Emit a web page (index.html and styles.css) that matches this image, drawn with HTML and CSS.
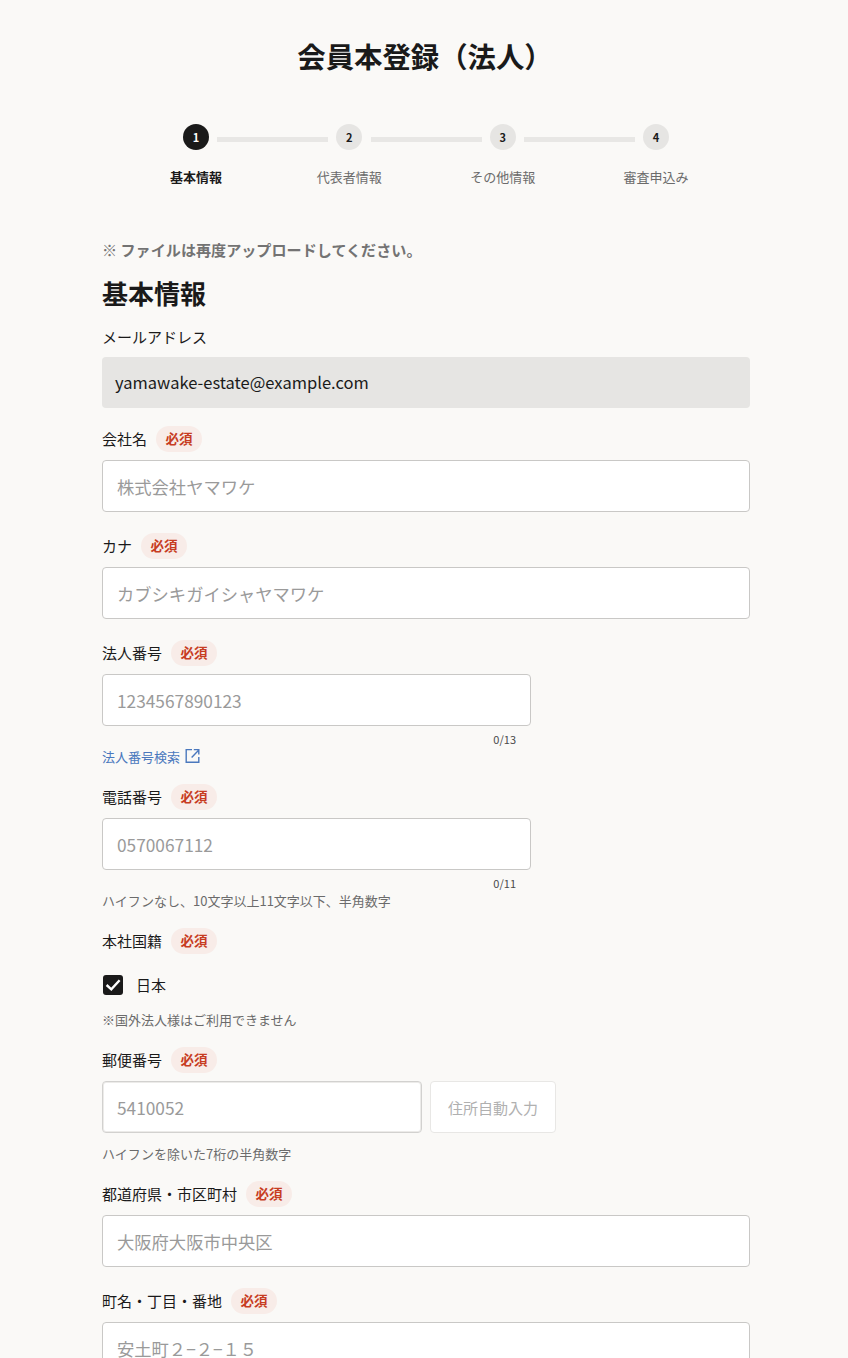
FILE: index.html
```html
<!DOCTYPE html>
<html lang="ja">
<head>
<meta charset="utf-8">
<title>会員本登録（法人）</title>
<link rel="stylesheet" href="styles.css">
</head>
<body>
<main class="page">
  <h1 class="title">会員本登録（法人）</h1>
  <ol class="stepper">
    <li class="step step-active"><span class="step-dot">1</span><span class="step-label">基本情報</span></li>
    <li class="step"><span class="step-dot">2</span><span class="step-label">代表者情報</span></li>
    <li class="step"><span class="step-dot">3</span><span class="step-label">その他情報</span></li>
    <li class="step"><span class="step-dot">4</span><span class="step-label">審査申込み</span></li>
  </ol>
  <form class="form">
    <p class="notice">※ ファイルは再度アップロードしてください。</p>
    <h2 class="section">基本情報</h2>

    <div class="field field-email">
      <div class="label-row"><span class="label">メールアドレス</span></div>
      <div class="readonly">yamawake-estate@example.com</div>
    </div>

    <div class="field">
      <div class="label-row"><span class="label">会社名</span><span class="badge">必須</span></div>
      <input class="input" placeholder="株式会社ヤマワケ">
    </div>

    <div class="field">
      <div class="label-row"><span class="label">カナ</span><span class="badge">必須</span></div>
      <input class="input" placeholder="カブシキガイシャヤマワケ">
    </div>

    <div class="field">
      <div class="label-row"><span class="label">法人番号</span><span class="badge">必須</span></div>
      <input class="input input-short" placeholder="1234567890123">
      <div class="counter">0/13</div>
      <a class="link" href="#">法人番号検索<svg class="ext" viewBox="0 0 16 16" width="16" height="16" fill="none" stroke="currentColor" stroke-width="1.4"><path d="M7 1.6H1.2v12.6h12.6V9"/><path d="M6.6 9.4 13.4 2.4M8.8 1.6h5v5"/></svg></a>
    </div>

    <div class="field field-link">
      <div class="label-row"><span class="label">電話番号</span><span class="badge">必須</span></div>
      <input class="input input-short" placeholder="0570067112">
      <div class="counter">0/11</div>
      <p class="hint">ハイフンなし、10文字以上11文字以下、半角数字</p>
    </div>

    <div class="field field-tight">
      <div class="label-row"><span class="label">本社国籍</span><span class="badge">必須</span></div>
      <label class="check">
        <span class="check-box"><svg viewBox="0 0 20 20" width="20" height="20" fill="none" stroke="#fff" stroke-width="2.4"><path d="M3.6 10 8.3 14.3 16.6 5.2"/></svg></span>
        <span class="check-text">日本</span>
      </label>
      <p class="hint hint-check">※国外法人様はご利用できません</p>
    </div>

    <div class="field field-tight">
      <div class="label-row"><span class="label">郵便番号</span><span class="badge">必須</span></div>
      <div class="zip-row">
        <input class="input input-zip" placeholder="5410052">
        <button class="zip-btn" type="button" disabled>住所自動入力</button>
      </div>
      <p class="hint hint-zip">ハイフンを除いた7桁の半角数字</p>
    </div>

    <div class="field field-tight">
      <div class="label-row"><span class="label">都道府県・市区町村</span><span class="badge">必須</span></div>
      <input class="input" placeholder="大阪府大阪市中央区">
    </div>

    <div class="field">
      <div class="label-row"><span class="label">町名・丁目・番地</span><span class="badge">必須</span></div>
      <input class="input" placeholder="安土町２−２−１５">
    </div>
  </form>
</main>
</body>
</html>
```
FILE: styles.css
```css
* { box-sizing: border-box; }
html, body { margin: 0; padding: 0; }
body {
  background: #faf9f7;
  color: #1a1a1a;
  font-family: "Noto Sans CJK JP", "Noto Sans", sans-serif;
  height: 1358px;
  overflow: hidden;
}
.page { width: 848px; padding: 35px 98px 0 102px; }
.title {
  margin: 0;
  font-size: 28.4px;
  line-height: 42px;
  font-weight: 700;
  text-align: center;
  padding-right: 2px;
}
.stepper {
  list-style: none;
  display: flex;
  justify-content: space-between;
  margin: 47px 0 0 54px;
  padding: 0;
  width: 540px;
}
.step {
  width: 80px;
  display: flex;
  flex-direction: column;
  align-items: center;
  gap: 17px;
  position: relative;
  color: #6b6b6b;
}
.step + .step::before {
  content: "";
  position: absolute;
  left: -92px;
  top: 13px;
  width: 111px;
  height: 5px;
  background: #e8e7e5;
}
.step-dot {
  width: 26px;
  height: 26px;
  border-radius: 50%;
  background: #e6e5e3;
  color: #1a1a1a;
  font-size: 11px;
  line-height: 26px;
  font-weight: 700;
  text-align: center;
}
.step-active .step-dot { background: #1a1a1a; color: #fff; }
.step-label { font-size: 13px; line-height: 20px; white-space: nowrap; }
.step-active .step-label { color: #1a1a1a; font-weight: 700; }
.form { margin-top: 51px; }
.notice {
  margin: 0;
  font-size: 15.1px;
  line-height: 22px;
  font-weight: 700;
  color: #737373;
}
.section {
  margin: 14px 0 0;
  font-size: 26px;
  line-height: 38px;
  font-weight: 700;
}
.field { margin-top: 21px; }
.field-email { margin-top: 12px; }
.field-email .label-row { margin-bottom: 7px; }
.field-email + .field { margin-top: 18px; }
.field-link { margin-top: 18px; }
.field-tight { margin-top: 17px; }
.label-row {
  display: flex;
  align-items: center;
  gap: 9px;
  height: 26px;
  margin-bottom: 8px;
}
.label { font-size: 15px; line-height: 24px; }
.badge {
  height: 26px;
  padding: 0 9.5px;
  border-radius: 13px;
  background: #f8ece8;
  color: #c73c22;
  font-size: 13.5px;
  line-height: 25px;
  font-weight: 700;
}
.readonly {
  height: 51px;
  padding: 0 13px;
  border-radius: 4px;
  background: #e6e5e3;
  font-size: 16.5px;
  line-height: 51px;
}
.input {
  display: block;
  width: 100%;
  height: 52px;
  padding: 0 14px;
  border: 1px solid #c9c8c6;
  border-radius: 4px;
  background: #fff;
  font-family: inherit;
  font-size: 17.3px;
  color: #1a1a1a;
}
.input::placeholder { color: #9a9a9a; opacity: 1; }
.input-short { width: 429px; }
.input-zip { width: 320px; border-color: #d2d1cf; box-shadow: inset 0 0 0 1px #ecebe9; }
.counter {
  width: 414px;
  margin-top: 5px;
  text-align: right;
  font-size: 11px;
  line-height: 16px;
  color: #4a4a4a;
}
.link {
  display: flex;
  align-items: center;
  gap: 5px;
  margin-top: -1px;
  height: 20px;
  font-size: 13px;
  color: #4a78bd;
  text-decoration: none;
}
.hint {
  margin: 0;
  font-size: 13px;
  line-height: 20px;
  color: #6b6b6b;
}
.check { display: flex; align-items: center; gap: 13px; margin-top: 19px; height: 24px; padding-left: 1px; }
.check-box {
  width: 20px;
  height: 20px;
  border-radius: 3px;
  background: #1a1a1a;
  display: block;
}
.check-box svg { display: block; }
.check-text { font-size: 15px; line-height: 24px; }
.hint-check { margin-top: 13px; }
.zip-row { display: flex; gap: 8px; }
.zip-btn {
  width: 126px;
  height: 52px;
  border: 1px solid #e8e7e5;
  border-radius: 4px;
  background: #fff;
  color: #b0b0b0;
  font-family: inherit;
  font-size: 15px;
  padding: 0;
}
.hint-zip { margin-top: 11px; }
```
